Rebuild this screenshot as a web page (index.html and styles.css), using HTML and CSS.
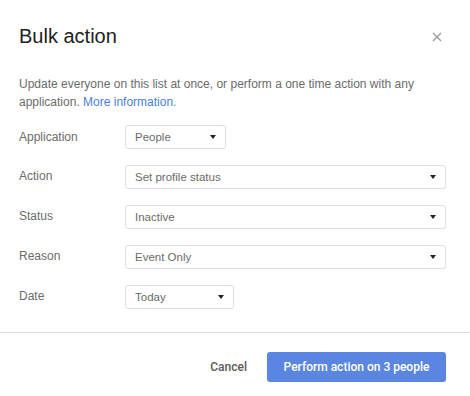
FILE: index.html
```html
<!DOCTYPE html>
<html>
<head>
<meta charset="utf-8">
<link rel="stylesheet" href="styles.css">
</head>
<body>
<div class="dialog">
  <div class="header">
    <h1 class="title">Bulk action</h1>
    <button class="close" aria-label="Close">
      <svg width="10" height="10" viewBox="0 0 10 10"><path d="M1 1L9 9M9 1L1 9" stroke="#9a9a9a" stroke-width="1.3" fill="none"/></svg>
    </button>
  </div>
  <p class="desc">Update everyone on this list at once, or perform a one time action with any application. <a class="link" href="#">More information.</a></p>
  <div class="form">
    <div class="row">
      <div class="label">Application</div>
      <div class="select small"><span>People</span><i class="caret"></i></div>
    </div>
    <div class="row">
      <div class="label">Action</div>
      <div class="select wide"><span>Set profile status</span><i class="caret"></i></div>
    </div>
    <div class="row">
      <div class="label">Status</div>
      <div class="select wide"><span>Inactive</span><i class="caret"></i></div>
    </div>
    <div class="row">
      <div class="label">Reason</div>
      <div class="select wide"><span>Event Only</span><i class="caret"></i></div>
    </div>
    <div class="row">
      <div class="label">Date</div>
      <div class="select date"><span>Today</span><i class="caret"></i></div>
    </div>
  </div>
  <div class="footer">
    <button class="cancel">Cancel</button>
    <button class="primary">Perform action on 3 people</button>
  </div>
</div>
</body>
</html>
```
FILE: styles.css
```css
* { box-sizing: border-box; }
html, body { margin: 0; padding: 0; background: #fff; }
body { font-family: "Liberation Sans", Arial, sans-serif; color: #222; }
.dialog { width: 470px; }
.header {
  display: flex;
  align-items: center;
  justify-content: space-between;
  padding: 24px 24px 0 19px;
}
.title {
  margin: 0;
  font-size: 20px;
  line-height: 24px;
  font-weight: 400;
  color: #222;
}
.close {
  border: 0;
  background: none;
  padding: 0;
  width: 10px;
  height: 10px;
  margin-right: 4px;
  margin-top: 2px;
  display: flex;
}
.desc {
  margin: 27px 24px 0 19px;
  font-size: 12px;
  line-height: 18px;
  color: #6b6b6b;
}
.link { color: #4a7fe0; text-decoration: none; }
.form {
  display: flex;
  flex-direction: column;
  gap: 16px;
  padding: 14px 24px 0 19px;
}
.row {
  display: flex;
  align-items: center;
}
.label {
  width: 106px;
  font-size: 12px;
  color: #6b6b6b;
  line-height: 18px;
  margin-top: -3px;
}
.row:first-child .label { margin-top: 0; }
.select {
  height: 24px;
  border: 1px solid #dcdfeb;
  border-radius: 3px;
  display: flex;
  align-items: center;
  justify-content: space-between;
  padding: 0 9px 0 9px;
  font-size: 11.5px;
  color: #6b6b6b;
}
.select.small { width: 101px; }
.select.date { width: 109px; }
.select.wide { flex: 1; }
.caret {
  width: 0;
  height: 0;
  border-left: 3.5px solid transparent;
  border-right: 3.5px solid transparent;
  border-top: 4px solid #222;
}
.footer {
  margin-top: 23px;
  border-top: 1px solid #e0e0e0;
  display: flex;
  justify-content: flex-end;
  align-items: center;
  gap: 20px;
  padding: 19px 24px 14px 19px;
}
.cancel {
  border: 0;
  background: none;
  padding: 0;
  font-family: Roboto, "Liberation Sans", sans-serif;
  font-size: 12px;
  font-weight: 500;
  color: #5a5a5a;
}
.primary {
  height: 30px;
  width: 179px;
  border: 0;
  border-radius: 3px;
  background: #5a86e2;
  color: #fff;
  font-family: Roboto, "Liberation Sans", sans-serif;
  font-size: 12px;
  font-weight: 500;
}
```
